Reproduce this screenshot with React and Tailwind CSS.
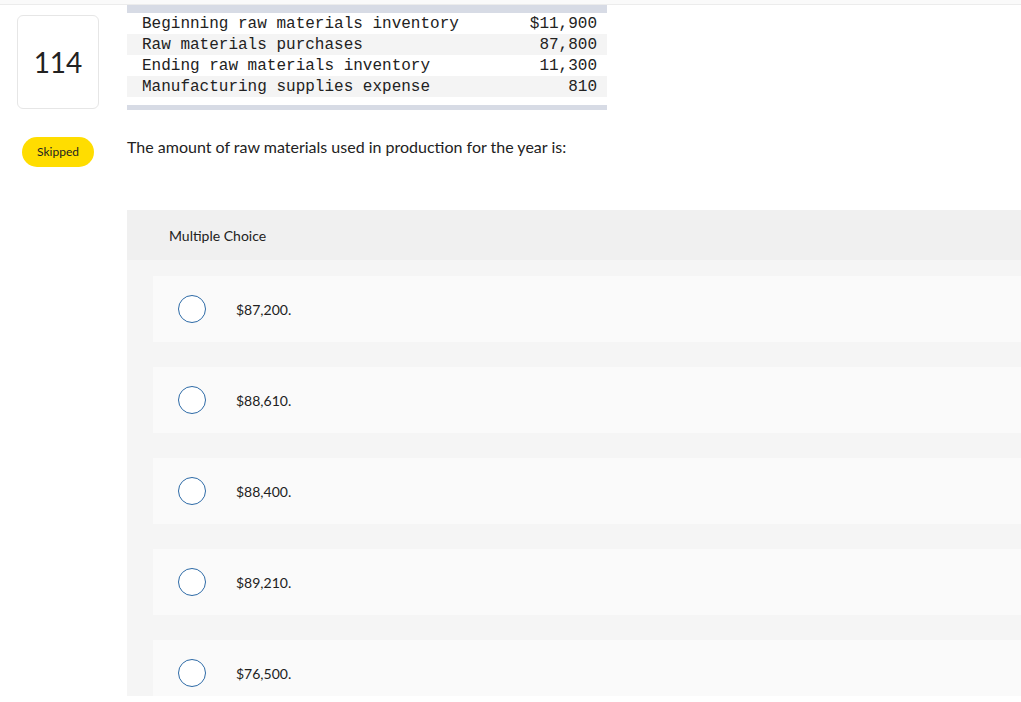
import React from 'react'

const rows = [
    ['Beginning raw materials inventory', '$11,900'],
    ['Raw materials purchases', '87,800'],
    ['Ending raw materials inventory', '11,300'],
    ['Manufacturing supplies expense', '810'],
];

const choices = ['$87,200.', '$88,610.', '$88,400.', '$89,210.', '$76,500.'];

function App() {
    return (
        <div className="w-[1021px] h-[702px] bg-white overflow-hidden text-[#222]" style={{ fontFamily: 'Lato, "Open Sans", sans-serif' }}>
            <div className="h-[5px] bg-[#fafafa] border-b border-[#ececec]"></div>

            <div className="grid grid-cols-[127px_1fr]">
                {/* question number */}
                <div className="pl-[17px] pt-[10px]">
                    <div className="w-[82px] h-[94px] rounded-[6px] border border-[#e6e6e6] flex items-center justify-center text-[28px] text-[#222]">
                        114
                    </div>
                </div>

                {/* data table */}
                <div className="w-[480px]">
                    <div className="h-[8px] bg-[#d7dbe5]"></div>
                    {rows.map((r, i) => (
                        <div
                            key={i}
                            className={`h-[21px] flex items-center justify-between pl-[15px] pr-[10px] text-[16px] text-[#222] ${i % 2 ? 'bg-[#f4f4f4]' : 'bg-white'}`}
                            style={{ fontFamily: '"Liberation Mono", monospace' }}
                        >
                            <span>{r[0]}</span>
                            <span>{r[1]}</span>
                        </div>
                    ))}
                    <div className="h-[8px]"></div>
                    <div className="h-[5px] bg-[#d7dbe5]"></div>
                </div>

                {/* status */}
                <div className="pl-[22px] pt-[27px]">
                    <div className="w-[72px] h-[30px] rounded-full bg-[#ffdd00] flex items-center justify-center text-[12px] text-[#222]">
                        Skipped
                    </div>
                </div>
                <div className="pt-[22px]">
                    <p className="h-[30px] leading-[30px] text-[16px] text-[#222]">
                        The amount of raw materials used in production for the year is:
                    </p>
                </div>

                {/* answers */}
                <div></div>
                <div className="mt-[43px] h-[486px] overflow-hidden bg-[#f5f5f5]">
                    <div className="h-[50px] bg-[#f0f0f0] flex items-center pl-[42px] text-[14px] text-[#222]">
                        Multiple Choice
                    </div>
                    <div className="pt-[16px] pl-[26px] flex flex-col gap-[25px]">
                        {choices.map((c, i) => (
                            <div key={i} className="h-[66px] shrink-0 bg-[#fafafa] flex items-center pl-[25px]">
                                <span className="w-[28px] h-[28px] rounded-full border-[1.5px] border-[#2d6aa6] bg-white"></span>
                                <span className="ml-[30px] text-[14px] text-[#222]">{c}</span>
                            </div>
                        ))}
                    </div>
                </div>
            </div>
        </div>
    )
}

export default App;
